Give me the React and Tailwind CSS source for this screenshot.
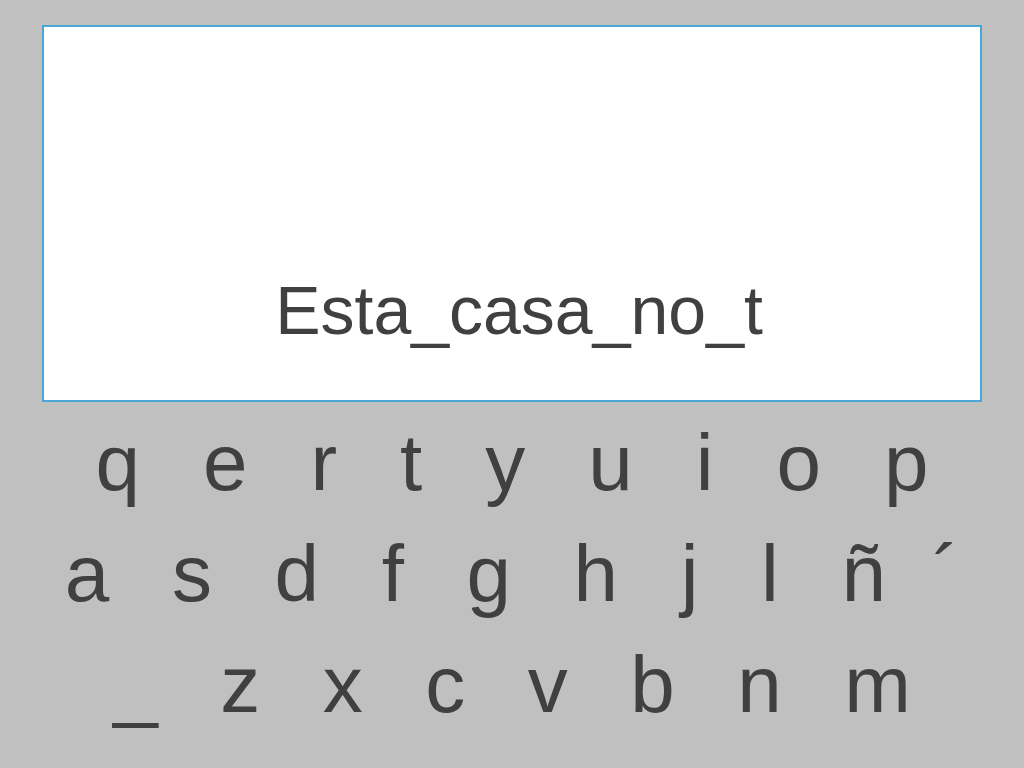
const rows = [
  ['q', 'e', 'r', 't', 'y', 'u', 'i', 'o', 'p'],
  ['a', 's', 'd', 'f', 'g', 'h', 'j', 'l', 'ñ', '´'],
  ['_', 'z', 'x', 'c', 'v', 'b', 'n', 'm'],
];

const Key = ({ ch }) => (
  <span className={ch === '´' ? '-ml-[16px]' : ''}>{ch}</span>
);

export default function App() {
  return (
    <div className="h-[768px] w-full bg-[#c0c0c0] pt-[25px] font-['Liberation_Sans',Arial,sans-serif] text-[#404040] overflow-hidden">
      <div className="mx-[42px] flex h-[377px] w-[940px] items-end justify-center border-2 border-[#4aa6d4] bg-white pb-[56px] pl-[14px]">
        <span className="text-[68px] leading-none">Esta_casa_no_t</span>
      </div>

      <div className="mt-[5px] text-[80px] leading-[111px]">
        <div className="flex justify-center gap-[63px]">
          {rows[0].map((c) => <Key key={c} ch={c} />)}
        </div>
        <div className="flex justify-center gap-[62.6px]">
          {rows[1].map((c) => <Key key={c} ch={c} />)}
        </div>
        <div className="flex justify-center gap-[62.5px]">
          {rows[2].map((c) => <Key key={c} ch={c} />)}
        </div>
      </div>
    </div>
  );
}
